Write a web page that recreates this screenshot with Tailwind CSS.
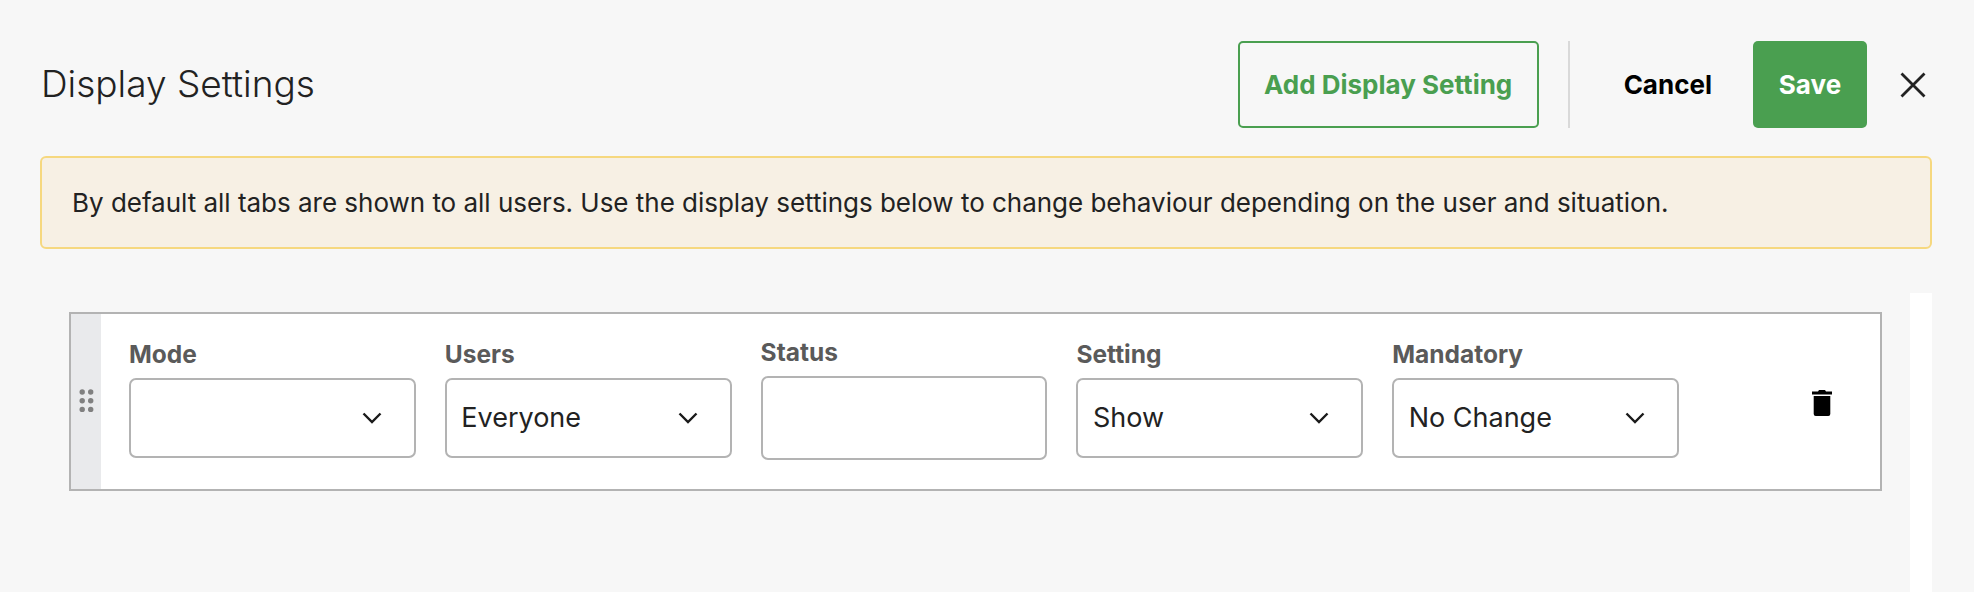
<!DOCTYPE html>
<html lang="en">
<head>
  <meta charset="UTF-8">
  <title>Display Settings</title>
  <script src="https://cdn.jsdelivr.net/npm/@tailwindcss/browser@4"></script>
</head>
<body class="bg-[#f7f7f7] font-['Inter',sans-serif] text-[#222] h-[592px] w-[1974px] overflow-hidden">

  <!-- Header -->
  <header class="flex items-center justify-between pl-[41px] pr-[48px] pt-[41px] h-[128px]">
    <h1 class="text-[37px] font-[350] -mt-[1px]">Display Settings</h1>
    <div class="flex items-center h-[87px]">
      <button class="h-full w-[301px] border-2 border-[#4a9f50] rounded-[5px] text-[#4a9f50] text-[26px] font-bold">Add Display Setting</button>
      <div class="w-[2px] h-full bg-[#d9d9d9] ml-[29px]"></div>
      <button class="text-black text-[26px] font-bold ml-[54px]">Cancel</button>
      <button class="h-full w-[114px] bg-[#4a9f50] rounded-[5px] text-white text-[26px] font-bold ml-[41px]">Save</button>
      <button class="ml-[33px]" aria-label="Close">
        <svg class="w-[26px] h-[26px] block" viewBox="0 0 26 26" fill="none" stroke="#222" stroke-width="2.8"><path d="M1.500 1.500l23 23M24.500 1.500l-23 23"/></svg>
      </button>
    </div>
  </header>

  <!-- Notice -->
  <div class="mt-[28px] ml-[40px] w-[1892px] h-[93px] flex items-center pl-[30px] bg-[#f7f0e4] border-2 border-[#f6d87f] rounded-[6px] text-[26px] tracking-[-0.02px]">
    By default all tabs are shown to all users. Use the display settings below to change behaviour depending on the user and situation.
  </div>

  <div class="flex mt-[44px]">
    <!-- Rule row -->
    <div class="mt-[19px] ml-[69px] w-[1813px] h-[179px] flex bg-white border-2 border-[#b3b3b3]">
      <div class="w-[30px] bg-[#e9eaec] flex justify-center pt-[75px]">
        <svg class="w-[15px] h-[24px]" viewBox="0 0 15 24" fill="#808080">
          <circle cx="3.200" cy="3" r="2.700"/><circle cx="11.700" cy="3" r="2.700"/>
          <circle cx="3.200" cy="11.700" r="2.700"/><circle cx="11.700" cy="11.700" r="2.700"/>
          <circle cx="3.200" cy="20.400" r="2.700"/><circle cx="11.700" cy="20.400" r="2.700"/>
        </svg>
      </div>
      <div class="flex gap-[29px] pl-[28px] pt-[24px]">
        <div class="w-[286.8px]">
          <div class="text-[24.5px] leading-[32px] font-bold text-[#5a5a5a] h-[40px]">Mode</div>
          <div class="h-[80px] border-2 border-[#b3b3b3] rounded-[7px] flex items-center justify-between pl-[14.5px] pr-[32px] text-[27px]">
            <span></span>
            <svg class="w-[20px] h-[12px]" viewBox="0 0 20 12" fill="none" stroke="#1a1a1a" stroke-width="2.4"><path d="M1.500 1.500L10 10l8.500-8.500"/></svg>
          </div>
        </div>
        <div class="w-[286.8px]">
          <div class="text-[24.5px] leading-[32px] font-bold text-[#5a5a5a] h-[40px]">Users</div>
          <div class="h-[80px] border-2 border-[#b3b3b3] rounded-[7px] flex items-center justify-between pl-[14.5px] pr-[32px] text-[27px]">
            <span>Everyone</span>
            <svg class="w-[20px] h-[12px]" viewBox="0 0 20 12" fill="none" stroke="#1a1a1a" stroke-width="2.4"><path d="M1.500 1.500L10 10l8.500-8.500"/></svg>
          </div>
        </div>
        <div class="w-[286.8px] -mt-[2px]">
          <div class="text-[24.5px] leading-[32px] font-bold text-[#5a5a5a] h-[40px]">Status</div>
          <div class="h-[84px] border-2 border-[#b3b3b3] rounded-[7px]"></div>
        </div>
        <div class="w-[286.8px]">
          <div class="text-[24.5px] leading-[32px] font-bold text-[#5a5a5a] h-[40px]">Setting</div>
          <div class="h-[80px] border-2 border-[#b3b3b3] rounded-[7px] flex items-center justify-between pl-[14.5px] pr-[32px] text-[27px]">
            <span>Show</span>
            <svg class="w-[20px] h-[12px]" viewBox="0 0 20 12" fill="none" stroke="#1a1a1a" stroke-width="2.4"><path d="M1.500 1.500L10 10l8.500-8.500"/></svg>
          </div>
        </div>
        <div class="w-[286.8px]">
          <div class="text-[24.5px] leading-[32px] font-bold text-[#5a5a5a] h-[40px]">Mandatory</div>
          <div class="h-[80px] border-2 border-[#b3b3b3] rounded-[7px] flex items-center justify-between pl-[14.5px] pr-[32px] text-[27px]">
            <span>No Change</span>
            <svg class="w-[20px] h-[12px]" viewBox="0 0 20 12" fill="none" stroke="#1a1a1a" stroke-width="2.4"><path d="M1.500 1.500L10 10l8.500-8.500"/></svg>
          </div>
        </div>
      </div>
      <button class="ml-[133px] mt-[76px] self-start" aria-label="Delete">
        <svg class="w-[20px] h-[26px] block" viewBox="0 0 20 26" fill="#000"><path d="M7 0h6l1 1.500h6v3H0v-3h6zM1.700 6h16.600v18a2 2 0 0 1-2 2H3.700a2 2 0 0 1-2-2z"/></svg>
      </button>
    </div>
    <!-- Scrollbar track -->
    <div class="ml-[28px] w-[22px] h-[300px] bg-white"></div>
  </div>
</body>
</html>
